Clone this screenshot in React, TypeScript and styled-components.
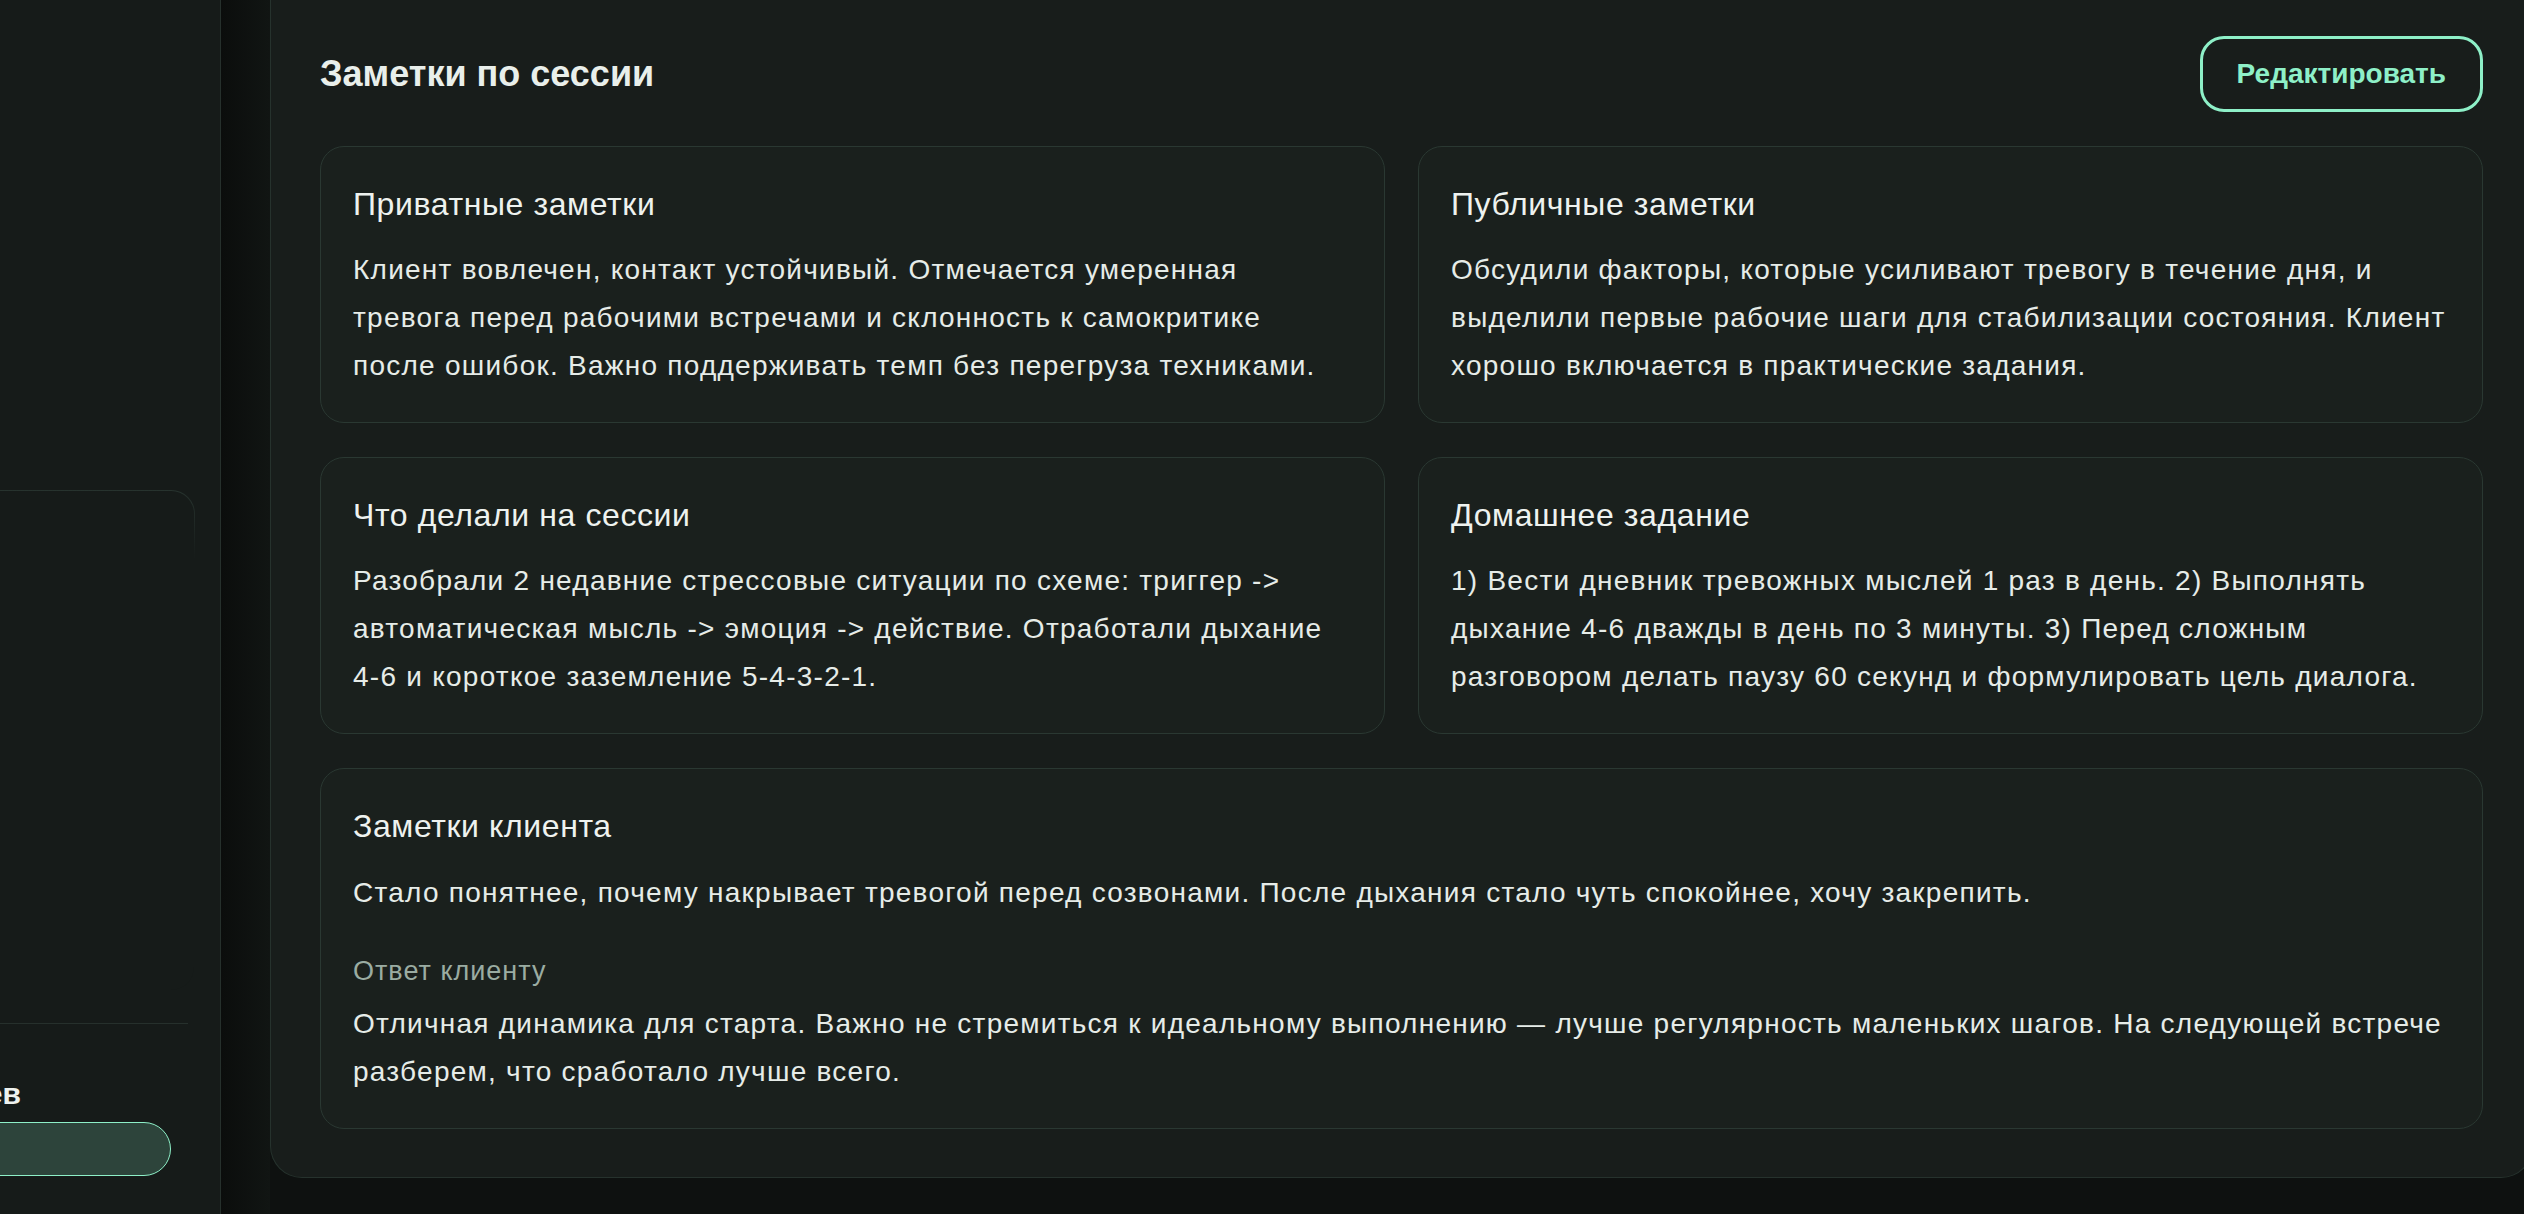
import React, { FC, ReactNode } from 'react';
import styled, { createGlobalStyle } from 'styled-components';

interface Note {
	title: string;
	text: ReactNode;
}

// keeps number ranges like 4-6 from breaking at the hyphen
const NoBreak = styled.span`
	white-space: nowrap;
`;

const notes: Note[] = [
	{
		title: 'Приватные заметки',
		text: 'Клиент вовлечен, контакт устойчивый. Отмечается умеренная тревога перед рабочими встречами и склонность к самокритике после ошибок. Важно поддерживать темп без перегруза техниками.',
	},
	{
		title: 'Публичные заметки',
		text: 'Обсудили факторы, которые усиливают тревогу в течение дня, и выделили первые рабочие шаги для стабилизации состояния. Клиент хорошо включается в практические задания.',
	},
	{
		title: 'Что делали на сессии',
		text: (
			<>
				Разобрали 2 недавние стрессовые ситуации по схеме: триггер -&gt; автоматическая мысль -&gt; эмоция -&gt; действие.
				Отработали дыхание <NoBreak>4-6</NoBreak> и короткое заземление <NoBreak>5-4-3-2-1.</NoBreak>
			</>
		),
	},
	{
		title: 'Домашнее задание',
		text: (
			<>
				1) Вести дневник тревожных мыслей 1 раз в день. 2) Выполнять дыхание <NoBreak>4-6</NoBreak> дважды в день по 3 минуты.
				3) Перед сложным разговором делать паузу 60 секунд и формулировать цель диалога.
			</>
		),
	},
];

const GlobalStyle = createGlobalStyle`
	* { box-sizing: border-box; }
	html, body {
		margin: 0;
		padding: 0;
		background: #0e1110;
		overflow: hidden;
	}
	body {
		font-family: 'Liberation Sans', Arial, Helvetica, sans-serif;
		color: #e6ece8;
	}
`;

const Page = styled.div`
	display: flex;
	width: 2524px;
	height: 1214px;
	overflow: hidden;
	background: #0e1110;
`;

const Sidebar = styled.aside`
	flex: 0 0 221px;
	display: flex;
	justify-content: flex-end;
	overflow: hidden;
	background: #161b19;
	border-right: 1px solid #26302c;
`;

const SidebarInner = styled.div`
	flex: 0 0 560px;
	display: flex;
	flex-direction: column;
	padding: 490px 25px 38px 0;
`;

// card border fades out below the rounded top edge
const SideCard = styled.div`
	flex: 1;
	margin-bottom: 32px;
	padding: 1px;
	border-radius: 24px;
	background: linear-gradient(180deg, #27332e 0, rgba(39, 51, 46, 0) 70px);
`;

const SideCardBody = styled.div`
	height: 100%;
	border-radius: 23px;
	background: #161b19;
`;

const SideFooter = styled.div`
	display: flex;
	flex-direction: column;
`;

const Divider = styled.hr`
	margin: 0 7px 0 0;
	border: none;
	height: 1px;
	background: #26302c;
`;

const SideLabel = styled.div`
	margin-top: 50px;
	padding-right: 174px;
	text-align: right;
	font-size: 30px;
	font-weight: 700;
	line-height: 40px;
	color: #eef2ef;
	white-space: nowrap;
`;

const PeriodPill = styled.button`
	margin: 8px 24px 0 0;
	height: 54px;
	border: 1.5px solid #8ef0c8;
	border-radius: 27px;
	background: #2d443b;
`;

const Main = styled.main`
	flex: 0 0 auto;
	padding-left: 49px;
	background: linear-gradient(90deg, #0b0d0c, #111513) left top / 49px 100% no-repeat, #0e1110;
`;

const Panel = styled.section`
	width: 2263px;
	padding: 36px 49px 48px;
	background: #181d1b;
	border: 1px solid #26322d;
	border-top: none;
	border-radius: 0 0 32px 32px;
`;

const Header = styled.div`
	display: flex;
	align-items: center;
	justify-content: space-between;
	margin-bottom: 34px;
`;

const Heading = styled.h2`
	margin: 0;
	font-size: 36px;
	font-weight: 700;
	line-height: 1.2;
	color: #e9efeb;
`;

const EditButton = styled.button`
	height: 76px;
	padding: 0 34px;
	border: 3px solid #8ef0c8;
	border-radius: 24px;
	background: transparent;
	color: #8ef0c8;
	font-family: 'Liberation Sans', Arial, Helvetica, sans-serif;
	font-size: 28px;
	font-weight: 700;
	cursor: pointer;
`;

const NotesGrid = styled.div`
	display: grid;
	grid-template-columns: 1fr 1fr;
	gap: 34px 33px;
`;

const NoteCard = styled.div<{ $wide?: boolean }>`
	grid-column: ${({ $wide }) => ($wide ? '1 / -1' : 'auto')};
	padding: 32px;
	background: #1a201d;
	border: 1px solid #2a3832;
	border-radius: 24px;
`;

const CardTitle = styled.h3`
	margin: 0 0 16px;
	font-size: 32px;
	font-weight: 400;
	line-height: 1.6;
	letter-spacing: 0.6px;
	color: #eef2ef;
`;

const CardText = styled.p`
	margin: 0;
	font-size: 28px;
	line-height: 48px;
	letter-spacing: 1.25px;
	color: #e6ece8;
`;

const ReplyLabel = styled.div`
	margin: 32px 0 7px;
	font-size: 27px;
	line-height: 44px;
	letter-spacing: 1px;
	color: #9aaca2;
`;

const App: FC = () => {
	return (
		<>
			<GlobalStyle />
			<Page>
				<Sidebar>
					<SidebarInner>
						<SideCard>
							<SideCardBody />
						</SideCard>
						<SideFooter>
							<Divider />
							<SideLabel>Хранить записи 12 месяцев</SideLabel>
							<PeriodPill />
						</SideFooter>
					</SidebarInner>
				</Sidebar>

				<Main>
					<Panel>
						<Header>
							<Heading>Заметки по сессии</Heading>
							<EditButton>Редактировать</EditButton>
						</Header>

						<NotesGrid>
							{notes.map((note: Note, index: number) => (
								<NoteCard key={index}>
									<CardTitle>{note.title}</CardTitle>
									<CardText>{note.text}</CardText>
								</NoteCard>
							))}

							<NoteCard $wide>
								<CardTitle>Заметки клиента</CardTitle>
								<CardText>
									Стало понятнее, почему накрывает тревогой перед созвонами. После дыхания стало чуть спокойнее, хочу закрепить.
								</CardText>
								<ReplyLabel>Ответ клиенту</ReplyLabel>
								<CardText>
									Отличная динамика для старта. Важно не стремиться к идеальному выполнению — лучше регулярность маленьких шагов. На следующей встрече разберем, что сработало лучше всего.
								</CardText>
							</NoteCard>
						</NotesGrid>
					</Panel>
				</Main>
			</Page>
		</>
	);
};

export default App;
